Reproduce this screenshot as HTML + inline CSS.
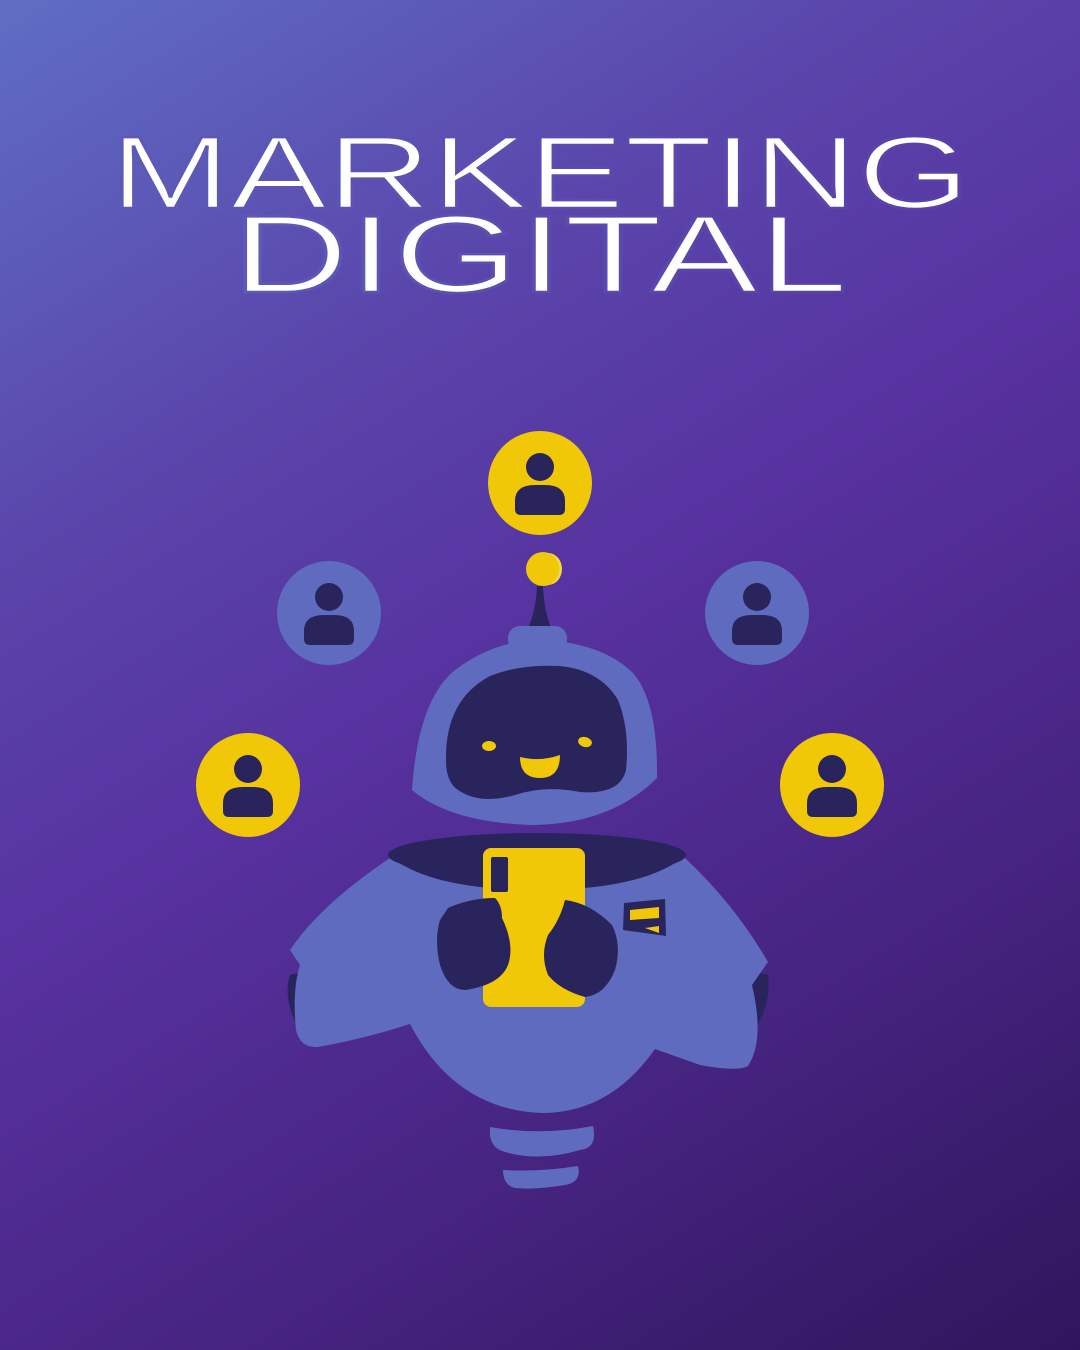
<!DOCTYPE html>
<html><head><meta charset="utf-8"><style>
html,body{margin:0;padding:0}
body{width:1080px;height:1350px;overflow:hidden;background:linear-gradient(148deg,#5f6ec4 0%,#5a45ab 28%,#5732a0 48%,#45237f 75%,#2f165c 100%)}
svg{display:block}
</style></head><body>
<svg width="1080" height="1350" viewBox="0 0 1080 1350" xmlns="http://www.w3.org/2000/svg">
<defs>
<linearGradient id="tg" x1="0" y1="0" x2="1" y2="0"><stop offset="0" stop-color="#5c5bb8"/><stop offset="1" stop-color="#5a3fa6"/></linearGradient>
<g id="p"><circle cx="0" cy="-16" r="14" fill="#29245c"/><path d="M-25 26 L-25 18 Q-25 2 -5 2 L5 2 Q25 2 25 18 L25 26 Q25 32 19 32 L-19 32 Q-25 32 -25 26Z" fill="#29245c"/></g>
</defs>
<g font-family="Liberation Sans, sans-serif" fill="#fff" stroke="url(#tg)" stroke-width="2.5">
<text x="110" y="208" font-size="103" textLength="860" lengthAdjust="spacingAndGlyphs">MARKETING</text>
<text x="232" y="292" font-size="110" textLength="616" lengthAdjust="spacingAndGlyphs">DIGITAL</text>
</g>
<circle cx="540" cy="483" r="52" fill="#f0c808"/><use href="#p" x="540" y="483"/>
<circle cx="329" cy="613" r="52" fill="#5e6bbf"/><use href="#p" x="329" y="613"/>
<circle cx="757" cy="613" r="52" fill="#5e6bbf"/><use href="#p" x="757" y="613"/>
<circle cx="248" cy="785" r="52" fill="#f0c808"/><use href="#p" x="248" y="785"/>
<circle cx="832" cy="785" r="52" fill="#f0c808"/><use href="#p" x="832" y="785"/>
<path d="M537 586 L543 586 Q544 612 552 630 L527 630 Q536 612 537 586Z" fill="#29245c"/>
<circle cx="543" cy="569" r="17" fill="#f0c808"/>
<path d="M548 553 A17 17 0 0 1 548 585 A14 16 0 0 0 548 553Z" fill="#f5d84a"/>
<rect x="508" y="626" width="59" height="26" rx="12" fill="#5e6bbf"/>
<path d="M412 790 Q418 700 455 670 Q495 640 540 640 Q600 642 632 672 Q658 700 657 778 Q610 825 530 825 Q450 822 412 790Z" fill="#5e6bbf"/>
<path d="M446 760 Q445 700 490 676 Q520 664 560 666 Q600 670 618 700 Q630 730 626 770 Q620 795 580 792 Q545 785 515 795 Q480 805 458 790 Q446 782 446 760Z" fill="#29245c"/>
<ellipse cx="489" cy="746" rx="7" ry="5" fill="#f0c808"/>
<ellipse cx="585" cy="742" rx="7" ry="5" fill="#f0c808" transform="rotate(15 585 742)"/>
<path d="M520 757 Q540 762 560 755 Q560 778 540 778 Q520 778 520 757Z" fill="#f0c808"/>
<path d="M290 975 Q282 1000 300 1030 L320 1030 L310 970Z" fill="#29245c"/>
<path d="M768 975 Q772 1000 755 1030 L740 1030 L750 970Z" fill="#29245c"/>
<path d="M290 950 Q320 905 390 858 L685 858 Q735 905 768 962 L752 985 Q765 1040 748 1066 Q738 1072 700 1065 L655 1049 Q610 1113 542 1113 Q455 1110 410 1024 Q360 1040 318 1047 Q300 1048 296 1030 Q292 990 300 965Z" fill="#5e6bbf"/>
<ellipse cx="537" cy="855" rx="149" ry="22" fill="#29245c"/>
<path d="M388 855 Q430 890 537 890 Q645 890 686 855Z" fill="#29245c"/>
<rect x="483" y="848" width="102" height="159" rx="8" fill="#f0c808"/>
<rect x="491" y="857" width="17" height="35" rx="2" fill="#29245c"/>
<path d="M448 908 Q470 898 495 898 Q502 905 502 918 Q515 945 508 965 Q500 985 465 990 Q448 990 440 965 Q434 940 440 920Z" fill="#29245c"/>
<path d="M565 900 Q590 903 612 925 Q622 945 615 970 Q605 995 585 997 Q560 990 548 975 Q540 955 548 935 Q560 920 565 900Z" fill="#29245c"/>
<path d="M624 903 L665 899 L666 936 L623 930Z" fill="#29245c"/>
<path d="M630 910 L659 907 L659 918 L630 920Z" fill="#f0c808"/>
<path d="M645 928 L659 926 L659 933Z" fill="#f0c808"/>
<path d="M490 1127 Q540 1136 593 1126 Q598 1148 580 1150 Q540 1162 505 1152 Q488 1148 490 1127Z" fill="#5e6bbf"/>
<path d="M503 1170 Q540 1172 578 1166 Q582 1182 565 1185 Q535 1190 515 1188 Q503 1185 503 1170Z" fill="#5e6bbf"/>
</svg>
</body></html>
